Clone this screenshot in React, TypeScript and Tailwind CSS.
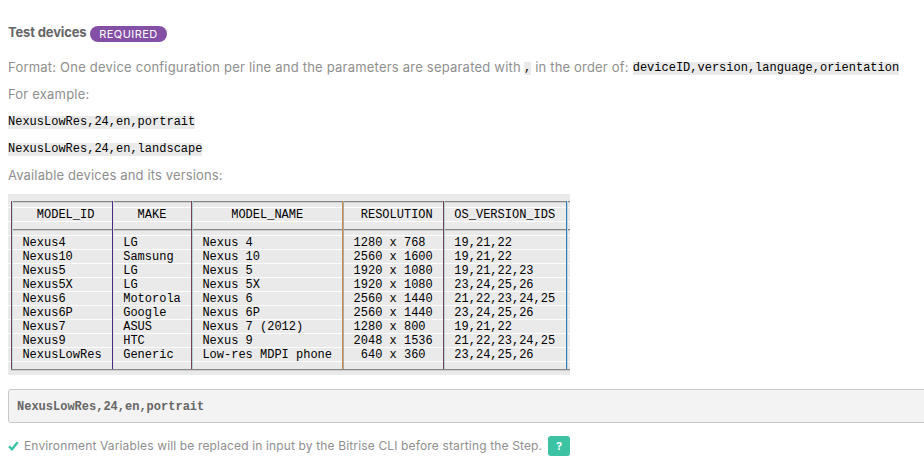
import React from "react";

const devices: string[][] = [
  ["Nexus4", "LG", "Nexus 4", "1280 x 768", "19,21,22"],
  ["Nexus10", "Samsung", "Nexus 10", "2560 x 1600", "19,21,22"],
  ["Nexus5", "LG", "Nexus 5", "1920 x 1080", "19,21,22,23"],
  ["Nexus5X", "LG", "Nexus 5X", "1920 x 1080", "23,24,25,26"],
  ["Nexus6", "Motorola", "Nexus 6", "2560 x 1440", "21,22,23,24,25"],
  ["Nexus6P", "Google", "Nexus 6P", "2560 x 1440", "23,24,25,26"],
  ["Nexus7", "ASUS", "Nexus 7 (2012)", "1280 x 800", "19,21,22"],
  ["Nexus9", "HTC", "Nexus 9", "2048 x 1536", "21,22,23,24,25"],
  ["NexusLowRes", "Generic", "Low-res MDPI phone", " 640 x 360", "23,24,25,26"],
];

const header = ["  MODEL_ID", "  MAKE", "    MODEL_NAME", " RESOLUTION", "OS_VERSION_IDS"];

const grid =
  "grid h-[14px] grid-cols-[100.8px_79.2px_151.2px_100.8px_1fr] whitespace-pre border-b border-[#fdfdfd] pl-[14.4px] leading-[14px]";

const mono = "font-['Liberation_Mono','Courier_New',monospace] text-[12px]";

function Code({ children }: { children: string }) {
  return <code className={`${mono} mt-[2px] block h-[13px] bg-[#eaeaea] leading-[13px] text-black`}>{children}</code>;
}

function Row({ cells }: { cells: string[] }) {
  return (
    <div className={grid}>
      {cells.map((c, i) => (
        <span key={i}>{c}</span>
      ))}
    </div>
  );
}

function Rule({ last = false }: { last?: boolean }) {
  return (
    <div className={`h-[14px] pl-[3px] pt-[7px] ${last ? "" : "border-b border-[#fdfdfd]"}`}>
      <div className="h-[2px] border-t border-[#858585] bg-[#d0d0d0]" />
    </div>
  );
}

function DeviceTable() {
  const line = "absolute top-[7px] h-[168px] w-[2px] border-l";
  return (
    <div className={`${mono} relative mt-[5px] h-[181px] w-[562px] overflow-hidden bg-[#eaeaea] text-black`}>
      <Rule />
      <Row cells={header} />
      <Rule />
      {devices.map((d) => (
        <Row key={d[0]} cells={d} />
      ))}
      <Rule last />
      <div className={`${line} left-[3px] border-[#7d4250] bg-[#b8dfe3]`} />
      <div className={`${line} left-[104px] border-[#4b2c8c] bg-[#e4e4d8]`} />
      <div className={`${line} left-[183px] border-[#7d4250] bg-[#b0d2d6]`} />
      <div className={`${line} left-[334px] border-[#c58b4d] bg-[#aaa9a8]`} />
      <div className={`${line} left-[435px] border-[#7d4250] bg-[#b0d2d6]`} />
      <div className={`${line} left-[558px] border-[#397cb4] bg-[#c0d8e4]`} />
    </div>
  );
}

export default function App() {
  return (
    <main className="h-[459px] w-[924px] overflow-hidden bg-white pl-2 pt-[23px] font-['Inter',sans-serif] text-[13px] text-[#8f8f8f]">
      <div className="flex h-5 items-center">
        <h1 className="w-[82px] whitespace-nowrap text-[13px] font-bold tracking-[-0.15px] text-[#666]">Test devices</h1>
        <span className="mt-[2px] flex h-4 w-[77px] items-center justify-center rounded-full bg-[#8350a6] text-[11px] tracking-[0.45px] text-white">
          REQUIRED
        </span>
      </div>
      <p className="mt-[11px] flex h-[27px] items-center whitespace-nowrap">
        <span className="w-[516px] tracking-[0.215px]">
          Format: One device configuration per line and the parameters are separated with
        </span>
        <Code>,</Code>
        <span className="ml-[4px] w-[97.5px] tracking-[0.18px]">in the order of:</span>
        <Code>deviceID,version,language,orientation</Code>
      </p>
      <p className="flex h-[27px] items-center tracking-[0.2px]">For example:</p>
      <p className="flex h-[27px] items-center"><Code>NexusLowRes,24,en,portrait</Code></p>
      <p className="flex h-[27px] items-center"><Code>NexusLowRes,24,en,landscape</Code></p>
      <p className="flex h-[27px] items-center tracking-[0.14px]">Available devices and its versions:</p>
      <DeviceTable />
      <div className="mt-[14px] flex h-[34px] w-[930px] items-center rounded-[3px] border border-[#c8c8c8] bg-[#f3f3f3] pl-2 pt-[2px] font-['Liberation_Mono',monospace] text-[12px] font-bold text-[#666]">
        NexusLowRes,24,en,portrait
      </div>
      <div className="mt-[13px] flex h-5 items-center whitespace-nowrap text-[12px]">
        <svg className="h-[10px] w-[11px] shrink-0" viewBox="0 0 11 10" fill="none">
          <path d="M1 5.3 4 8.2 9.7 1.2" stroke="#3bc3a3" strokeWidth="2.4" />
        </svg>
        <span className="ml-[5px] w-[524px] tracking-[0.145px]">
          Environment Variables will be replaced in input by the Bitrise CLI before starting the Step.
        </span>
        <button className="flex h-5 w-[22px] items-center justify-center rounded-[3px] bg-[#3bc3a3] text-[11px] font-bold text-white">
          ?
        </button>
      </div>
    </main>
  );
}
